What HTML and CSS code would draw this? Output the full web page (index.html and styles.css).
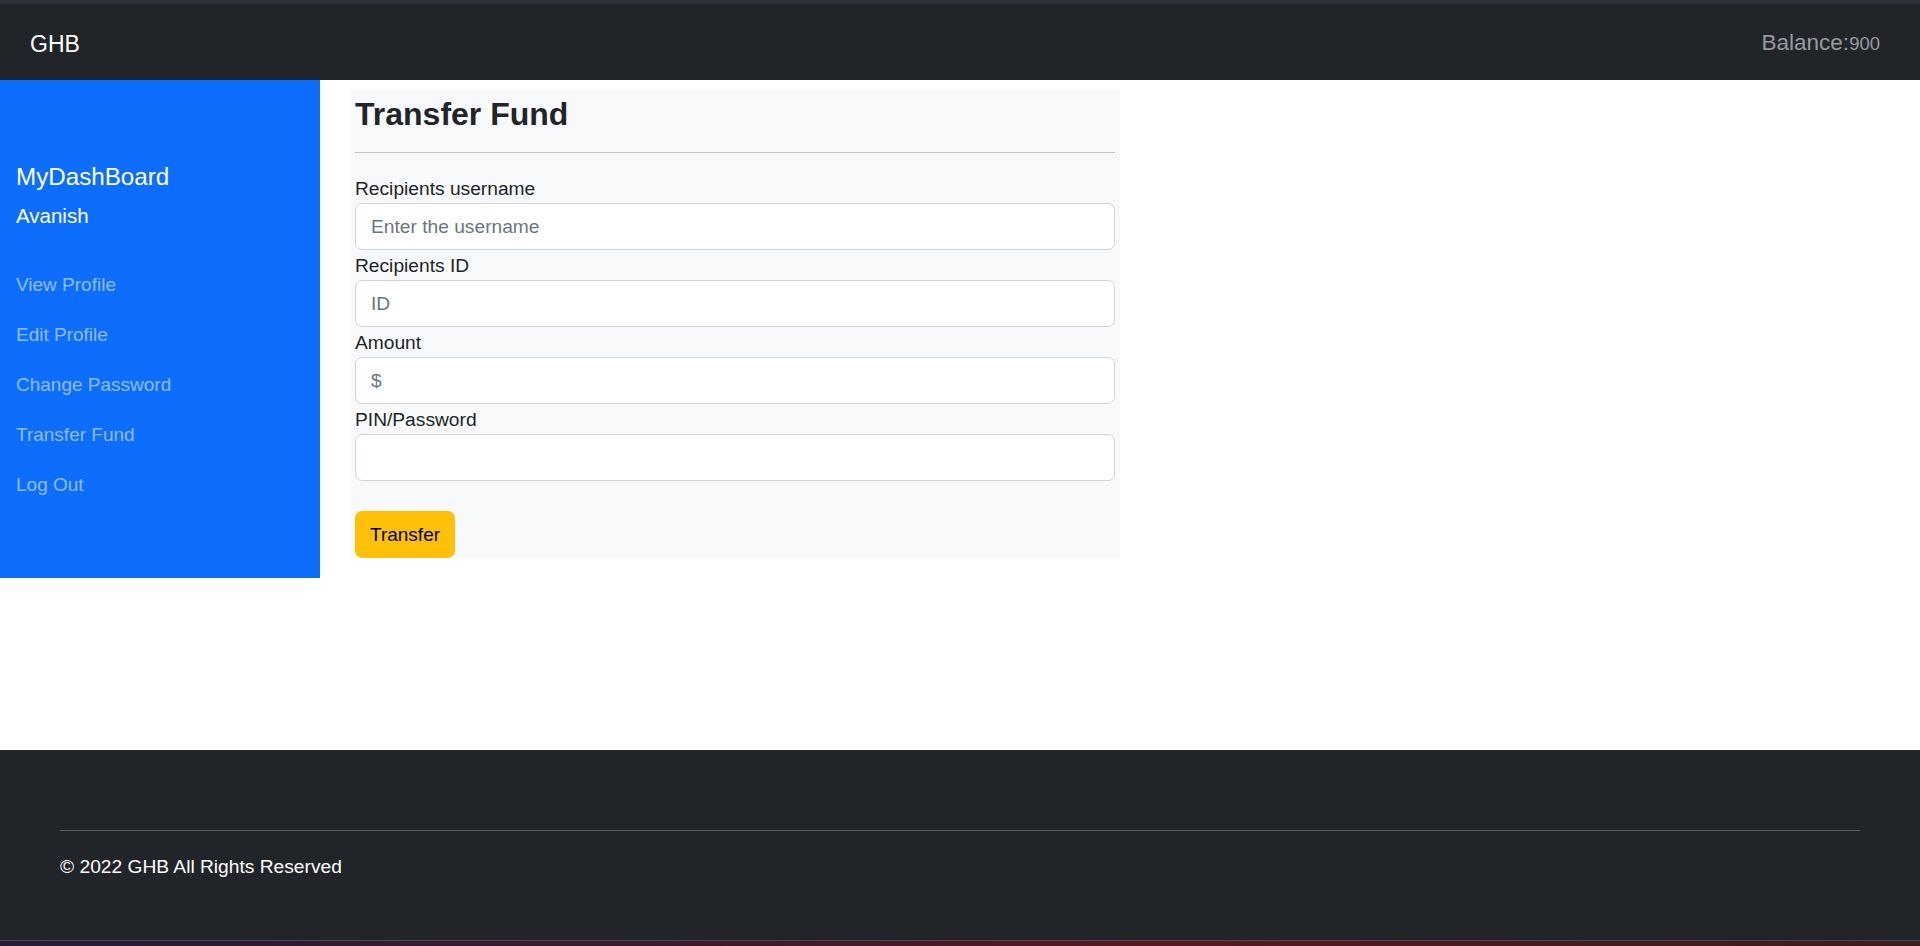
FILE: index.html
```html
<!DOCTYPE html>
<html lang="en">
<head>
<meta charset="utf-8">
<title>GHB - Transfer Fund</title>
<link rel="stylesheet" href="styles.css">
</head>
<body>
<div class="chrome-top"></div>
<nav class="topbar">
  <a class="brand" href="#">GHB</a>
  <div class="balance">Balance:<span class="amount">900</span></div>
</nav>
<div class="main">
  <aside class="sidebar">
    <h5 class="side-title">MyDashBoard</h5>
    <h6 class="side-user">Avanish</h6>
    <ul class="side-nav">
      <li><a href="#">View Profile</a></li>
      <li><a href="#">Edit Profile</a></li>
      <li><a href="#">Change Password</a></li>
      <li><a href="#">Transfer Fund</a></li>
      <li><a href="#">Log Out</a></li>
    </ul>
  </aside>
  <section class="content">
    <form class="card">
      <h3 class="card-title">Transfer Fund</h3>
      <hr class="card-rule">
      <label class="field-label" for="u">Recipients username</label>
      <input class="field" id="u" type="text" placeholder="Enter the username">
      <label class="field-label" for="i">Recipients ID</label>
      <input class="field" id="i" type="text" placeholder="ID">
      <label class="field-label" for="a">Amount</label>
      <input class="field" id="a" type="text" placeholder="$">
      <label class="field-label" for="p">PIN/Password</label>
      <input class="field" id="p" type="password">
      <button class="btn-transfer" type="button">Transfer</button>
    </form>
  </section>
</div>
<footer class="footer">
  <div class="footer-inner">
    <hr class="footer-rule">
    <p class="copyright">© 2022 GHB All Rights Reserved</p>
  </div>
</footer>
<div class="chrome-bottom"></div>
</body>
</html>
```

FILE: styles.css
```css
* { box-sizing: border-box; }

html, body {
  margin: 0;
  padding: 0;
}

body {
  font-family: "Liberation Sans", Arial, sans-serif;
  font-size: 19.2px;
  color: #212529;
  background: #ffffff;
  height: 946px;
  overflow: hidden;
}

.chrome-top {
  height: 4px;
  background: #30303d;
}

.topbar {
  height: 76px;
  background: #212529;
  display: flex;
  align-items: center;
  justify-content: space-between;
  padding: 3px 40px 0 30px;
}

.brand {
  color: #ffffff;
  text-decoration: none;
  font-size: 23px;
  line-height: 30px;
}

.balance {
  color: rgba(255, 255, 255, 0.55);
  font-size: 22.5px;
  line-height: 30px;
  display: flex;
  align-items: baseline;
}

.amount {
  font-size: 18.5px;
}

.main {
  height: 670px;
  display: flex;
  align-items: flex-start;
}

.sidebar {
  width: 320px;
  flex: 0 0 320px;
  background: #0d6efd;
  padding: 82px 16px 68px;
}

.side-title {
  margin: 0;
  color: #ffffff;
  font-weight: 400;
  font-size: 24.2px;
  line-height: 29px;
}

.side-user {
  margin: 12px 0 0;
  color: #ffffff;
  font-weight: 400;
  font-size: 20.5px;
  line-height: 25px;
}

.side-nav {
  list-style: none;
  margin: 32px 0 0;
  padding: 0;
}

.side-nav a {
  display: block;
  padding: 10px 0;
  line-height: 30px;
  font-size: 19px;
  color: rgba(255, 255, 255, 0.55);
  text-decoration: none;
}

.content {
  margin: 10px 0 0 30px;
  width: 770px;
}

.card {
  background: #f8f9fa;
  padding: 0 5px;
  margin: 0;
}

.card-title {
  margin: 0;
  padding-top: 6px;
  font-size: 32px;
  line-height: 36px;
  font-weight: 700;
  color: #212529;
}

.card-rule {
  margin: 20px 0 20px;
  border: 0;
  border-top: 1px solid #c3c5c7;
  height: 0;
}

.field-label {
  display: block;
  padding-top: 2px;
  line-height: 28px;
  font-size: 19.2px;
  color: #212529;
}

.field {
  display: block;
  width: 100%;
  height: 47px;
  padding: 7.5px 15px;
  font-family: inherit;
  font-size: 19.2px;
  line-height: 30px;
  color: #212529;
  background: #ffffff;
  border: 1px solid #ced4da;
  border-radius: 7px;
  margin: 0;
}

.field::placeholder {
  color: #6c757d;
  opacity: 1;
}

.btn-transfer {
  display: block;
  margin-top: 30px;
  padding: 7.5px 14px;
  font-family: inherit;
  font-size: 19px;
  line-height: 30px;
  color: #000000;
  background: #ffc107;
  border: 1px solid #ffc107;
  border-radius: 7px;
}

.footer {
  height: 190px;
  background: #212529;
  padding: 80px 60px 0;
}

.footer-rule {
  margin: 0;
  border: 0;
  border-top: 1px solid #5a5d61;
  height: 0;
}

.copyright {
  margin: 21px 0 0;
  color: #ffffff;
  font-size: 19.2px;
  line-height: 30px;
}

.chrome-bottom {
  height: 6px;
  border-top: 1px solid #4a4a52;
  background: linear-gradient(90deg, #261b35 0%, #3a1a2c 35%, #5a1820 60%, #4a1a1e 80%, #3b1e1c 100%);
}
```
